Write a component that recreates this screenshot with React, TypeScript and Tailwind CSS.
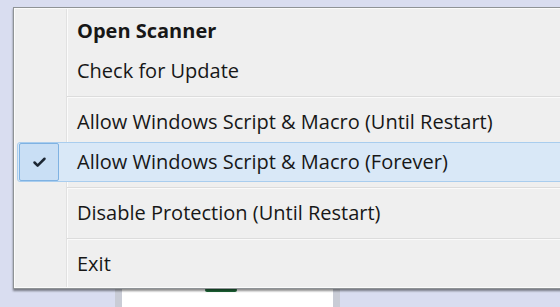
import { Check } from "lucide-react";

type Item = { label: string; bold?: boolean; checked?: boolean } | "sep";

const items: Item[] = [
  { label: "Open Scanner", bold: true },
  { label: "Check for Update" },
  "sep",
  { label: "Allow Windows Script & Macro (Until Restart)" },
  { label: "Allow Windows Script & Macro (Forever)", checked: true },
  "sep",
  { label: "Disable Protection (Until Restart)" },
  "sep",
  { label: "Exit" },
];

function Separator() {
  return (
    <div className="h-[11px] flex items-center">
      <div className="w-[53px] h-full" />
      <div className="flex-1 flex flex-col">
        <div className="h-px bg-[#dcdcdc]" />
        <div className="h-px bg-[#fafafa]" />
      </div>
    </div>
  );
}

function MenuRow({ label, bold, checked }: { label: string; bold?: boolean; checked?: boolean }) {
  return (
    <div
      className={`h-[40px] flex items-center ml-[3px] rounded-[3px] border ${
        checked ? "bg-[#d9e8f7] border-[#a9cdee]" : "border-transparent"
      }`}
    >
      <div className="w-[42px] h-full flex items-center justify-center">
        {checked && (
          <div className="w-[40px] h-[38px] flex items-center justify-center rounded-[2px] border border-[#7fb2e2] bg-[#c9dff5]">
            <Check className="w-[15px] h-[15px] text-[#1c2733]" strokeWidth={4} />
          </div>
        )}
      </div>
      <span className={`ml-[17px] text-[20px] leading-none text-[#171717] ${bold ? "font-bold" : ""}`}>{label}</span>
    </div>
  );
}

export default function App() {
  return (
    <div
      className="relative w-[560px] h-[307px] overflow-hidden bg-[#d9ddf0]"
      style={{ fontFamily: '"Open Sans", "Noto Sans", sans-serif' }}
    >
      {/* window sitting behind the menu */}
      <div className="absolute left-[115px] top-[270px] w-[225px] h-[60px] bg-[#c9ccd6] px-[7px]">
        <div className="w-full h-full bg-white" />
        <div className="absolute left-[90px] top-[18px] w-[32px] h-[4px] bg-[#1f6b3a] rounded-sm" />
      </div>

      <div className="relative ml-[13px] mt-[7px] w-[600px] h-[282px] bg-[#efefef] border border-[#8f9396] shadow-[0_2px_2px_rgba(0,0,0,0.45)]">
        <div className="absolute inset-0 border border-[#fbfbfb]" />
        {/* gutter line */}
        <div className="absolute left-[52px] top-[1px] bottom-[1px] w-px bg-[#e1e1e1]" />
        <div className="absolute left-[53px] top-[1px] bottom-[1px] w-px bg-[#fbfbfb]" />
        <div className="relative flex flex-col pt-[3px]">
          {items.map((it, i) =>
            it === "sep" ? <Separator key={i} /> : <MenuRow key={i} {...it} />
          )}
        </div>
      </div>
    </div>
  );
}
